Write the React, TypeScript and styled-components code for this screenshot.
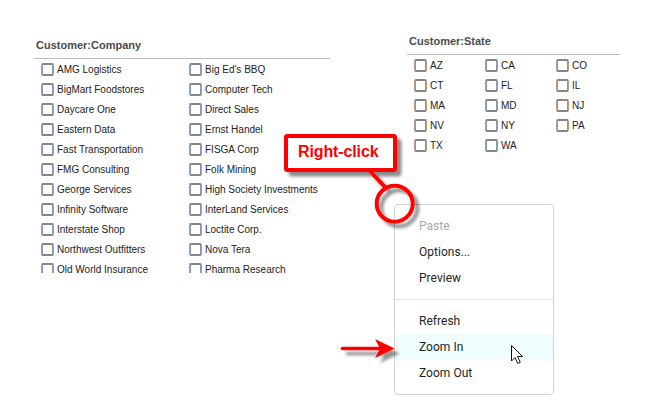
import React from "react";
import styled, { createGlobalStyle } from "styled-components";

const Global = createGlobalStyle`
  body { margin: 0; background: #fff; }
  * { box-sizing: border-box; }
`;

const Canvas = styled.main`
  position: relative;
  width: 649px;
  height: 410px;
  overflow: hidden;
  display: flex;
  align-items: flex-start;
  padding-left: 34px;
  gap: 77px;
  font-family: "Liberation Sans", Arial, sans-serif;
`;

const Panel = styled.section<{ $width: number; $top: number; $height: number }>`
  width: ${(p) => p.$width}px;
  margin-top: ${(p) => p.$top}px;
  height: ${(p) => p.$height}px;
  overflow: hidden;
`;

const PanelTitle = styled.h2`
  margin: 0;
  height: 22px;
  padding-left: 2px;
  border-bottom: 1px solid #bdbdbd;
  font-size: 11px;
  font-weight: bold;
  line-height: 17px;
  color: #4b4b4b;
  white-space: nowrap;
`;

const Options = styled.div<{ $column: number; $count: number }>`
  display: grid;
  grid-template-columns: repeat(${(p) => p.$count}, ${(p) => p.$column}px);
  grid-auto-rows: 20px;
  padding: 1px 0 0 7px;
`;

const Option = styled.label`
  display: flex;
  align-items: center;
  gap: 3px;
  font-size: 10px;
  line-height: 20px;
  color: #222;
  white-space: nowrap;
`;

const Box = styled.span`
  width: 13px;
  height: 13px;
  flex: none;
  margin-bottom: 1px;
  border: solid;
  border-width: 2px 1px;
  border-color: #868686 #b89a84 #868686 #b89a84;
  border-radius: 2px;
  box-shadow: inset 1px 0 #7f9dbd, inset -1px 0 #8798ae;
`;

const Menu = styled.nav`
  position: absolute;
  left: 394px;
  top: 204px;
  width: 160px;
  height: 191px;
  padding-top: 8px;
  border: 1px solid #d2d2d2;
  border-radius: 4px;
  background: #fff;
  font-family: Roboto, sans-serif;
`;

const MenuItem = styled.div<{ $disabled?: boolean; $active?: boolean }>`
  height: 26px;
  padding-left: 24px;
  font-size: 12px;
  line-height: 26px;
  letter-spacing: 0.03px;
  color: ${(p) => (p.$disabled ? "#a9a9a9" : "#252525")};
  background: ${(p) => (p.$active ? "#effdfe" : "transparent")};
`;

const Separator = styled.div`
  height: 1px;
  margin: 8px 0;
  background: #e2e2e2;
`;

const Annotations = styled.svg`
  position: absolute;
  left: 0;
  top: 0;
  pointer-events: none;
`;

const Callout = styled.div`
  position: absolute;
  left: 284px;
  top: 134px;
  width: 113px;
  height: 38px;
  border: 4px solid #f00;
  border-radius: 4px;
  background: #fff;
  color: #f00;
  font-size: 16px;
  font-weight: bold;
  line-height: 28px;
  letter-spacing: -0.12px;
  padding-left: 10px;
  white-space: nowrap;
`;

const companies = [
  "AMG Logistics", "Big Ed's BBQ", "BigMart Foodstores", "Computer Tech",
  "Daycare One", "Direct Sales", "Eastern Data", "Ernst Handel",
  "Fast Transportation", "FISGA Corp", "FMG Consulting", "Folk Mining",
  "George Services", "High Society Investments", "Infinity Software", "InterLand Services",
  "Interstate Shop", "Loctite Corp.", "Northwest Outfitters", "Nova Tera",
  "Old World Insurance", "Pharma Research",
];
const states = ["AZ", "CA", "CO", "CT", "FL", "IL", "MA", "MD", "NJ", "NV", "NY", "PA", "TX", "WA"];

function OptionList({ items, column, count }: { items: string[]; column: number; count: number }) {
  return (
    <Options $column={column} $count={count}>
      {items.map((item) => (
        <Option key={item}><Box />{item}</Option>
      ))}
    </Options>
  );
}

export default function App() {
  return (
    <>
      <Global />
      <Canvas>
        <Panel $width={296} $top={37} $height={236}>
          <PanelTitle>Customer:Company</PanelTitle>
          <OptionList items={companies} column={148} count={2} />
        </Panel>
        <Panel $width={213} $top={33} $height={130}>
          <PanelTitle>Customer:State</PanelTitle>
          <OptionList items={states} column={71} count={3} />
        </Panel>
        <Menu>
          <MenuItem $disabled>Paste</MenuItem>
          <MenuItem>Options...</MenuItem>
          <MenuItem>Preview</MenuItem>
          <Separator />
          <MenuItem>Refresh</MenuItem>
          <MenuItem $active>Zoom In</MenuItem>
          <MenuItem>Zoom Out</MenuItem>
        </Menu>
        <Annotations width="649" height="410" viewBox="0 0 649 410">
          <defs>
            <filter id="shadow" x="-20%" y="-20%" width="150%" height="160%">
              <feDropShadow dx="4.5" dy="4.5" stdDeviation="1.6" floodColor="#000" floodOpacity="0.45" />
            </filter>
            <filter id="arrowShadow" filterUnits="userSpaceOnUse" x="330" y="325" width="90" height="50">
              <feDropShadow dx="5" dy="5" stdDeviation="1.5" floodColor="#000" floodOpacity="0.42" />
            </filter>
          </defs>
          <g filter="url(#shadow)">
            <rect x="284" y="134" width="113" height="38" rx="4" fill="#f00" />
            <path d="M369 170 386 188" stroke="#f00" strokeWidth="4" />
            <circle cx="394.7" cy="203.7" r="18" fill="none" stroke="#f00" strokeWidth="4" />
          </g>
          <g filter="url(#arrowShadow)">
            <path d="M342.5 348.5H382" stroke="#f00" strokeWidth="3.6" strokeLinecap="round" />
            <path d="M375 339 394.5 348.5 375 358 380 348.5Z" fill="#f00" />
          </g>
          <path d="M511.5 345.5V361L515 357.5 517.8 363.5 520.3 362.3 517.5 356.5H522.5Z" fill="#fff" stroke="#111" strokeWidth="1" />
        </Annotations>
        <Callout>Right-click</Callout>
      </Canvas>
    </>
  );
}
